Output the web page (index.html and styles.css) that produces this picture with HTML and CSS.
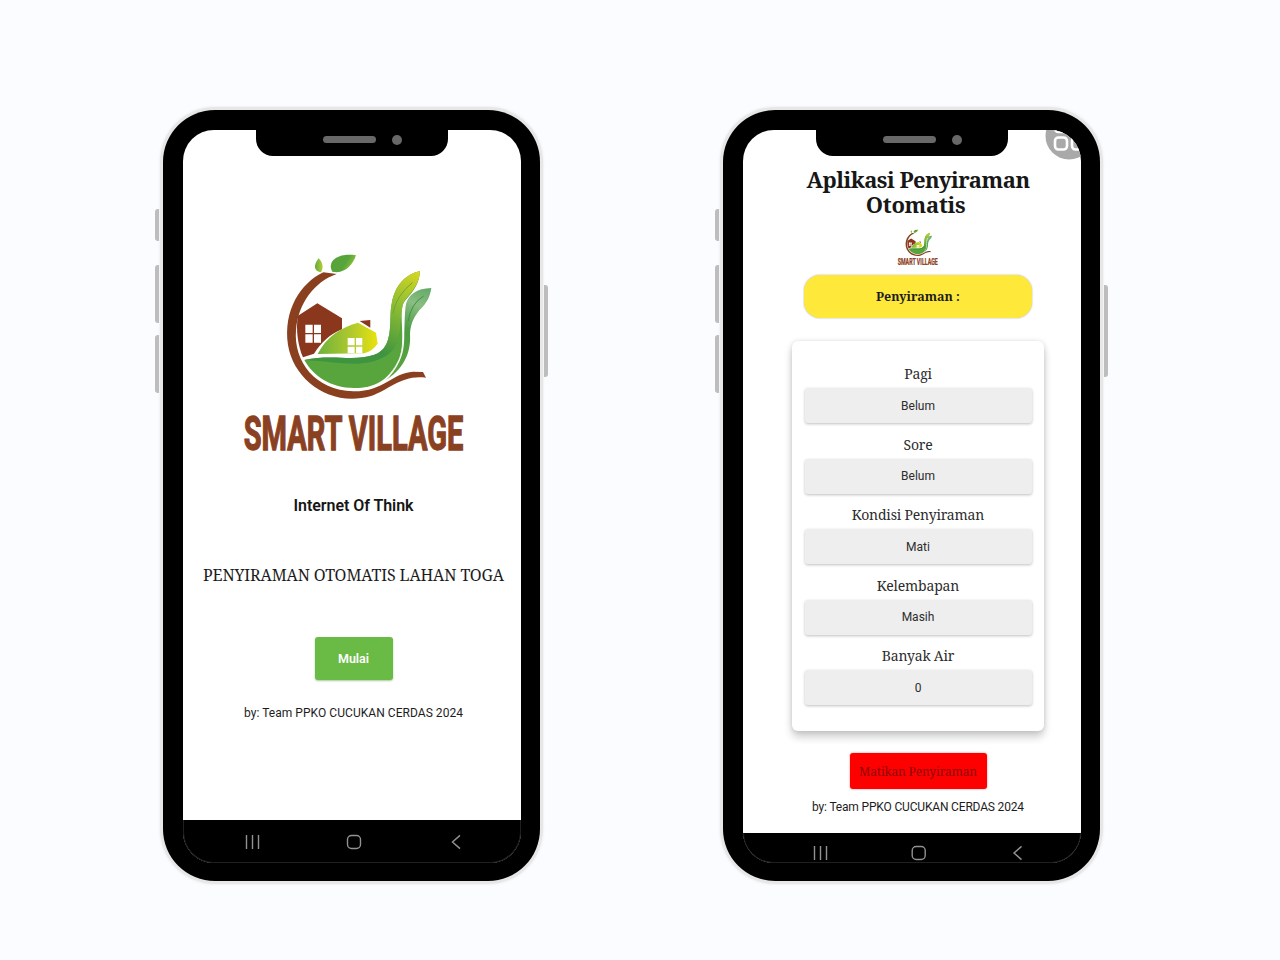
FILE: index.html
```html
<!DOCTYPE html>
<html lang="id">
<head>
<meta charset="utf-8">
<title>Smart Village</title>
<link rel="stylesheet" href="styles.css">
</head>
<body>
<svg class="defs" width="0" height="0" aria-hidden="true">
  <defs>
    <linearGradient id="leaf" x1="0" y1="0.3" x2="1" y2="0.7"><stop offset=".55" stop-color="#56a43a"/><stop offset="1" stop-color="#a9cf3c"/></linearGradient>
    <linearGradient id="bud" x1="0" y1="0" x2="1" y2="0"><stop offset="0" stop-color="#5fa73a"/><stop offset="1" stop-color="#b6cf3a"/></linearGradient>
    <linearGradient id="hill" x1="0" y1="0" x2="1" y2="0"><stop offset="0" stop-color="#6fb13c"/><stop offset=".6" stop-color="#b4cb2c"/><stop offset="1" stop-color="#e8e30c"/></linearGradient>
    <linearGradient id="tip" x1="570" y1="95" x2="440" y2="330" gradientUnits="userSpaceOnUse"><stop offset="0" stop-color="#d7d722"/><stop offset=".45" stop-color="#8fbd32"/><stop offset="1" stop-color="#3f9440"/></linearGradient>
    <linearGradient id="tip2" x1="600" y1="150" x2="500" y2="400" gradientUnits="userSpaceOnUse"><stop offset="0" stop-color="#65aa68"/><stop offset=".2" stop-color="#8bbd83"/><stop offset=".5" stop-color="#4b9c43"/><stop offset="1" stop-color="#5ba53e"/></linearGradient>
    <symbol id="logo" viewBox="0 0 750 690">
      <path fill="#8a401f" d="M280 97 320 102C252 126 205 190 198 270C190 365 256 451 370 454C461 455 487 398 549 395L579 396 588 413C516 403 478 449 423 468C302 503 191 421 174 315C159 212 211 130 280 97Z"/>
      <path fill="url(#bud)" d="M266 55C282 71 279 88 273 97C253 94 248 78 266 55Z"/>
      <path fill="url(#leaf)" d="M307 95C290 64 322 38 378 46C368 75 345 103 307 95Z"/>
      <path fill="#8a371d" d="M204 227 262 190 336 235V268C300 282 274 307 252 341L219 352C205 320 196 268 204 227Z"/>
      <path fill="#fff" d="M226 254H248V279H226ZM252 254H273V279H252ZM226 283H248V308H226ZM252 283H273V308H252Z"/>
      <path fill="#8a371d" d="M389 243 421 240V263Z"/>
      <path fill="url(#hill)" d="M263 342C288 292 330 263 384 248L438 278 443 311Q427 334 402 340Z"/>
      <path fill="#fff" d="M353 294H374V316H353ZM378 294H397V316H378ZM353 320H374V340H353ZM378 320H397V340H378Z"/>
      <path fill="#58a53d" d="M223 360C307 341 371 366 433 344C496 324 475 232 485 192C494 135 528 102 570 93C568 130 552 153 525 182C501 208 531 298 507 357C475 425 430 444 375 444C302 445 248 406 223 360Z"/>
      <path fill="url(#tip)" d="M223 360C307 341 371 366 433 344C496 324 475 232 485 192C494 135 528 102 570 93C568 130 549 153 523 182C500 238 528 310 469 347C403 388 324 365 223 360Z"/>
      <path fill="none" stroke="#6fa832" stroke-width="3" d="M548 127Q498 167 489 220"/>
      <path fill="url(#tip2)" d="M604 144C560 145 535 165 528 192C520 239 529 323 501 370Q486 399 464 422C518 391 544 341 540 282C541 249 555 228 568 211C590 190 600 171 604 144Z"/>
      <path fill="none" stroke="#fff" stroke-width="4" d="M525 187C512 239 533 308 507 362Q491 397 462 424"/>
      <path fill="none" stroke="#3f9342" stroke-width="3" d="M581 168Q543 190 534 245"/>
      <text class="wordmark" x="41" y="629" textLength="659" lengthAdjust="spacingAndGlyphs">SMART VILLAGE</text>
    </symbol>
    <g id="recents"><path d="M-6 -7V7M0 -7V7M6 -7V7"/></g>
    <g id="home"><rect x="-6.500" y="-6.500" width="13" height="13" rx="4"/></g>
    <g id="back"><path d="M4 -6.600 -3.500 0 4 6.600"/></g>
  </defs>
</svg>

<main class="stage">
  <section class="phone">
    <i class="key key-mute"></i><i class="key key-up"></i><i class="key key-down"></i><i class="key key-power"></i>
    <div class="notch"><i class="speaker"></i><i class="camera"></i></div>
    <div class="screen">
      <div class="view intro">
        <svg class="logo"><use href="#logo"/></svg>
        <h2 class="tagline">Internet Of Think</h2>
        <p class="subject">PENYIRAMAN OTOMATIS LAHAN TOGA</p>
        <button class="start">Mulai</button>
        <p class="credit">by: Team PPKO CUCUKAN CERDAS 2024</p>
      </div>
      <nav class="nav"><svg class="navicons" viewBox="0 0 338 22"><use href="#recents" x="68.500" y="11"/><use href="#home" x="170" y="11"/><use href="#back" x="272" y="11"/></svg></nav>
    </div>
  </section>

  <section class="phone">
    <i class="key key-mute"></i><i class="key key-up"></i><i class="key key-down"></i><i class="key key-power"></i>
    <div class="notch"><i class="speaker"></i><i class="camera"></i></div>
    <div class="screen">
      <svg class="bubble" viewBox="0 0 48 48"><circle cx="24" cy="24" r="23.500" fill="#a9a9a9"/><g fill="none" stroke="#fff" stroke-width="2.600"><rect x="10" y="8" width="12" height="12" rx="3.500"/><rect x="10" y="25.500" width="12" height="12" rx="3.500"/><rect x="27" y="25.500" width="12" height="12" rx="3.500"/></g></svg>
      <div class="view control">
        <h1 class="title">Aplikasi Penyiraman<br><span class="title-end">Otomatis</span></h1>
        <svg class="logo-small"><use href="#logo"/></svg>
        <div class="status">Penyiraman :</div>
        <div class="card">
          <div class="field"><span class="label">Pagi</span><div class="value">Belum</div></div>
          <div class="field"><span class="label">Sore</span><div class="value">Belum</div></div>
          <div class="field"><span class="label">Kondisi Penyiraman</span><div class="value">Mati</div></div>
          <div class="field"><span class="label">Kelembapan</span><div class="value">Masih</div></div>
          <div class="field"><span class="label">Banyak Air</span><div class="value">0</div></div>
        </div>
        <button class="stop">Matikan Penyiraman</button>
        <p class="credit">by: Team PPKO CUCUKAN CERDAS 2024</p>
      </div>
      <nav class="nav nav-low"><svg class="navicons" viewBox="0 0 338 22"><use href="#recents" x="76.500" y="11"/><use href="#home" x="174.700" y="11"/><use href="#back" x="273.500" y="11"/></svg></nav>
    </div>
  </section>
</main>
</body>
</html>
```
FILE: styles.css
```css
* { box-sizing: border-box; }
body { margin: 0; background: #fafcff; font-family: Roboto, "Liberation Sans", sans-serif; color: #1d1d1d; }
h1, h2, p { margin: 0; }
button { border: 0; padding: 0; font: inherit; }
.defs { position: absolute; }
.stage { display: flex; gap: 183px; height: 960px; padding: 110px 0 0 163px; overflow: hidden; }
.phone { position: relative; width: 377px; height: 771px; padding: 20px 19px 18px 20px; background: #000; border-radius: 52px; box-shadow: 0 0 0 3px #e7e7e7, 0 0 2px 4px #f1f2f4; }
.screen { position: relative; display: flex; flex-direction: column; height: 733px; background: #fff; border-radius: 31px; overflow: hidden; }
.key { position: absolute; width: 4px; left: -8px; background: #bdbdbd; border-radius: 3px 0 0 3px; }
.key-mute { top: 99px; height: 32px; }
.key-up { top: 155px; height: 58px; }
.key-down { top: 225px; height: 58px; }
.key-power { left: auto; right: -8px; top: 175px; height: 92px; border-radius: 0 3px 3px 0; }
.notch { position: absolute; z-index: 2; left: 93px; top: 19px; width: 192px; height: 27px; background: #000; border-radius: 0 0 17px 17px; display: flex; align-items: center; padding: 0 0 6px 67px; gap: 16px; }
.speaker { width: 53px; height: 7px; border-radius: 4px; background: #686868; }
.camera { width: 10px; height: 10px; border-radius: 50%; background: #686868; }
.view { flex: 1; display: flex; flex-direction: column; align-items: center; }
.nav { height: 43px; background: #000; border: 1px solid #202020; border-top: 0; border-radius: 0 0 31px 31px; box-shadow: 0 0 0 31px #000; clip-path: inset(0); padding-top: 11px; display: flex; }
.nav-low { height: 30px; padding-top: 9px; }
.navicons { flex: none; width: 338px; height: 22px; fill: none; stroke: #929292; stroke-width: 1.4; }

.logo { width: 250px; height: 230px; margin: 110px 0 0 6px; }
.wordmark { font: 700 144px Roboto, sans-serif; fill: #8a4122; stroke: #8a4122; stroke-width: 4px; }
.tagline { margin-top: 25px; margin-left: 3px; font-size: 16px; line-height: 22px; font-weight: 600; letter-spacing: -.05px; color: #161616; }
.subject { margin-top: 46px; margin-left: 3px; font: 16px/24px "Noto Serif", "DejaVu Serif Condensed", serif; letter-spacing: -.12px; white-space: nowrap; }
.start { margin: 50px 0 0 3px; width: 78px; height: 43px; background: #6aba46; border-radius: 3px; color: #fff; font-size: 12.500px; font-weight: 600; box-shadow: 0 1px 2px #a9c99c; }
.credit { margin: 24px 0 0 3px; font-size: 12px; line-height: 18px; letter-spacing: .05px; white-space: nowrap; }

.control { padding-left: 12px; }
.title { margin-top: 37px; font: 700 22px/25px "Noto Serif", "DejaVu Serif Condensed", serif; letter-spacing: -.5px; text-align: center; white-space: nowrap; color: #171717; }
.title-end { letter-spacing: -.3px; margin-right: 5px; }
.logo-small { width: 46px; height: 42px; margin-top: 10px; }
.status { margin-top: 6px; width: 228px; height: 43px; border-radius: 16px; background: #fee93b; display: flex; align-items: center; justify-content: center; font: 700 12.500px "Noto Serif", "DejaVu Serif Condensed", serif; box-shadow: 0 0 2px #aaa; }
.card { margin-top: 23px; width: 252px; height: 390px; padding: 21px 13px 0; border-radius: 6px; background: #fff; box-shadow: 0 0 5px rgba(0,0,0,.12), 0 6px 9px rgba(0,0,0,.2); display: flex; flex-direction: column; gap: 9.600px; }
.field { height: 61px; display: flex; flex-direction: column; align-items: center; gap: 2px; color: #2d2d2d; }
.label { font: 14px/24px "Noto Serif", "DejaVu Serif Condensed", serif; letter-spacing: -.18px; }
.value { width: 227px; height: 35px; flex: none; border-radius: 3px; background: #eee; display: flex; align-items: center; justify-content: center; font-size: 12px; box-shadow: 0 1px 3px rgba(0,0,0,.26); }
.stop { margin-top: 22px; width: 137px; height: 36px; flex: none; border-radius: 3px; background: #fe0000; color: #8b0808; font: 12px "Noto Serif", "DejaVu Serif Condensed", serif; letter-spacing: -.15px; box-shadow: 0 0 2px #f77; }
.control .credit { margin: 9px 0 0; letter-spacing: -.17px; }
.bubble { position: absolute; left: 302px; top: -18px; width: 48px; height: 48px; }
```
